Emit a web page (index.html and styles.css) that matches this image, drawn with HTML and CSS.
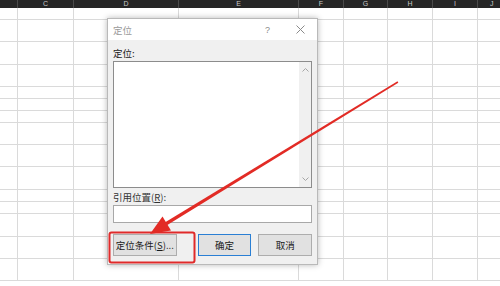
FILE: index.html
```html
<!DOCTYPE html>
<html lang="zh-CN">
  <head>
    <meta charset="UTF-8" />
    <title>定位</title>
    <link rel="stylesheet" href="styles.css">
  </head>
  <body>
    <div class="sheet">
      <div class="col-head">
        <div class="hc w17"></div>
        <div class="hc w56"><span>C</span></div>
        <div class="hc w105"><span>D</span></div>
        <div class="hc w120"><span>E</span></div>
        <div class="hc w45"><span>F</span></div>
        <div class="hc w44"><span>G</span></div>
        <div class="hc w45"><span>H</span></div>
        <div class="hc w45"><span>I</span></div>
        <div class="hc last"><span>J</span></div>
      </div>
      <div class="row h12"></div>
      <div class="row h22"></div>
      <div class="row h23"></div>
      <div class="row h22"></div>
      <div class="row h12"></div>
      <div class="row h12"></div>
      <div class="row h12"></div>
      <div class="row h22"></div>
      <div class="row h22"></div>
      <div class="row h23"></div>
      <div class="row h12"></div>
      <div class="row h12"></div>
      <div class="row h23"></div>
      <div class="row h22"></div>
      <div class="row h22"></div>
    </div>

    <!-- 定位 对话框 -->
    <div class="dialog">
      <div class="dialog-title">
        <span class="title-text">定位</span>
        <span class="title-btns">
          <span class="help">?</span>
          <svg class="close" width="9" height="9" viewBox="0 0 9 9">
            <path d="M0.5 0.5 L8.5 8.5 M8.5 0.5 L0.5 8.5" stroke="#8a8a8a" stroke-width="1" fill="none" />
          </svg>
        </span>
      </div>
      <div class="dialog-body">
        <div class="label">定位:</div>
        <div class="listbox">
          <div class="list-items"></div>
          <div class="scrollbar">
            <svg width="7" height="4" viewBox="0 0 7 4"><path d="M0.5 3.5 L3.5 0.5 L6.5 3.5" stroke="#a6a6a6" fill="none" /></svg>
            <svg width="7" height="4" viewBox="0 0 7 4"><path d="M0.5 0.5 L3.5 3.5 L6.5 0.5" stroke="#a6a6a6" fill="none" /></svg>
          </div>
        </div>
        <div class="label ref">引用位置(<u>R</u>):</div>
        <div class="input"></div>
        <div class="buttons">
          <button class="btn special">定位条件(<u>S</u>)...</button>
          <button class="btn ok">确定</button>
          <button class="btn">取消</button>
        </div>
      </div>
    </div>

    <!-- 红色标注 -->
    <svg class="marks" width="500" height="286" viewBox="0 0 500 286">
      <rect x="109.5" y="232.5" width="85" height="30" rx="2" fill="none" stroke="#e02a2a" stroke-width="2" />
      <polygon points="397.5,81.3 398.3,82.7 166.5,225.6 164.8,222.4" fill="#e22b25" />
      <polygon points="150,234 162.5,216.5 171,230.5" fill="#e22b25" />
    </svg>
  </body>
</html>
```

FILE: styles.css
```css
body {
  margin: 0;
  width: 500px;
  height: 286px;
  overflow: hidden;
  background: #fff;
  font-family: "Noto Sans CJK SC", "Liberation Sans", sans-serif;
}

.sheet {
  width: 500px;
}

.col-head {
  display: flex;
  height: 8px;
  background: #262626;
}

.hc {
  flex: none;
  box-sizing: border-box;
  border-right: 1px solid #4a4a4a;
  text-align: center;
  color: #c8c8c8;
  font-family: "Liberation Sans", sans-serif;
  font-size: 7px;
  line-height: 8px;
}

.w17 { width: 18px; }
.w56 { width: 56px; }
.w105 { width: 105px; }
.w120 { width: 120px; }
.w45 { width: 45px; }
.w44 { width: 44px; }
.last { flex: 1; border-right: none; text-align: left; padding-left: 12px; }

/* 单元格网格线 */
.row {
  box-sizing: border-box;
  border-bottom: 1px solid #dadada;
  background: linear-gradient(to right,
    transparent 17px, #dadada 17px, #dadada 18px,
    transparent 18px, transparent 73px, #dadada 73px, #dadada 74px,
    transparent 74px, transparent 178px, #dadada 178px, #dadada 179px,
    transparent 179px, transparent 298px, #dadada 298px, #dadada 299px,
    transparent 299px, transparent 343px, #dadada 343px, #dadada 344px,
    transparent 344px, transparent 387px, #dadada 387px, #dadada 388px,
    transparent 388px, transparent 432px, #dadada 432px, #dadada 433px,
    transparent 433px, transparent 477px, #dadada 477px, #dadada 478px,
    transparent 478px);
}

.h12 { height: 12px; }
.h22 { height: 22px; }
.h23 { height: 23px; }

.dialog {
  position: absolute;
  left: 107px;
  top: 18px;
  width: 211px;
  height: 247px;
  box-sizing: border-box;
  border: 1px solid #b9b9b9;
  background: #f0f0f0;
  box-shadow: 0 0 6px rgba(0, 0, 0, 0.28);
  display: flex;
  flex-direction: column;
}

.dialog-title {
  height: 21px;
  background: #fff;
  display: flex;
  align-items: center;
  justify-content: space-between;
  padding: 0 12px 0 5px;
}

.title-text {
  color: #9a9a9a;
  font-size: 9.5px;
}

.title-btns {
  display: flex;
  align-items: center;
  gap: 26px;
}

.help {
  color: #8a8a8a;
  font-family: "Liberation Sans", sans-serif;
  font-size: 9px;
}

.dialog-body {
  flex: 1;
  padding: 7px 5px 0 5px;
  display: flex;
  flex-direction: column;
}

.label {
  color: #1a1a1a;
  font-size: 9.5px;
  line-height: 12px;
  height: 14px;
}

.label.ref {
  margin-top: 3px;
  height: 14px;
  color: #333;
}

.label u {
  text-underline-offset: 1px;
}

.listbox {
  height: 127px;
  box-sizing: border-box;
  border: 1px solid #8c8c8c;
  background: #fff;
  display: flex;
}

.list-items {
  flex: 1;
}

.scrollbar {
  width: 12px;
  background: #f0f0f0;
  display: flex;
  flex-direction: column;
  align-items: center;
  justify-content: space-between;
  padding: 6px 0;
}

.input {
  height: 18px;
  box-sizing: border-box;
  border: 1px solid #a8a8a8;
  background: #fff;
}

.buttons {
  display: flex;
  margin-top: 11px;
  gap: 7px;
}

.btn {
  width: 54px;
  height: 22px;
  padding: 0;
  box-sizing: border-box;
  border: 1px solid #adadad;
  background: #e1e1e1;
  color: #1a1a1a;
  font-family: "Noto Sans CJK SC", "Liberation Sans", sans-serif;
  font-size: 9.5px;
}

.btn.special {
  width: 64px;
  margin-right: 14px;
}

.btn.ok {
  border: 1px solid #2a7fd4;
}

.marks {
  position: absolute;
  left: 0;
  top: 0;
  pointer-events: none;
}
```
